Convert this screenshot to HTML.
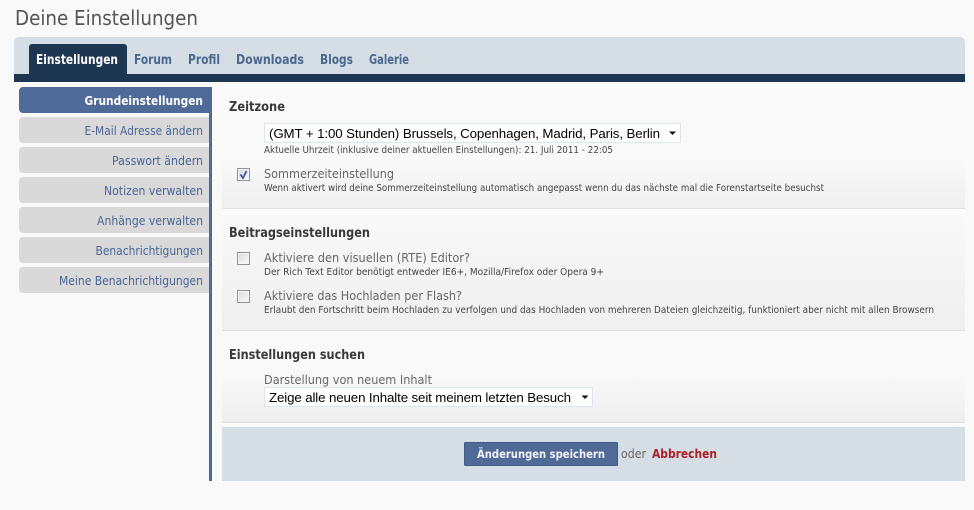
<!DOCTYPE html>
<html lang="de">
<head>
<meta charset="utf-8">
<title>Deine Einstellungen</title>
<style>
html,body{margin:0;padding:0;background:#f9f9f9;width:974px;height:510px;overflow:hidden}
svg{display:block;position:absolute;left:0;top:0}
text{font-family:"DejaVu Sans",sans-serif;white-space:pre}
.s{font-size:10px;fill:#444}
.l{font-size:12px;fill:#666}
.h{font-size:13px;font-weight:bold;fill:#3a3a3a}
.n{font-size:12px;fill:#4a6595}
.t{font-size:13px;font-weight:bold;fill:#4a688e}
.f{font-family:"Liberation Sans",sans-serif;font-size:13.300px;fill:#000}
</style>
</head>
<body>
<svg width="974" height="510" viewBox="0 0 974 510" xmlns="http://www.w3.org/2000/svg">
<defs>
<linearGradient id="g" x1="0" y1="0" x2="0" y2="1"><stop offset="0" stop-color="#f9f9f9"/><stop offset="1" stop-color="#efefef"/></linearGradient>
<linearGradient id="c" x1="0" y1="0" x2="1" y2="1"><stop offset="0" stop-color="#dcdcdc"/><stop offset="1" stop-color="#f8f8f8"/></linearGradient>
<linearGradient id="d" x1="0" y1="0" x2="1" y2="1"><stop offset="0" stop-color="#d5dae6"/><stop offset="1" stop-color="#f2f4f8"/></linearGradient>
</defs>
<rect width="974" height="510" fill="#f9f9f9"/>
<text x="15" y="25" font-size="20" fill="#555" textLength="183" lengthAdjust="spacingAndGlyphs">Deine Einstellungen</text>

<path d="M14 74V42a5 5 0 0 1 5-5H960a5 5 0 0 1 5 5V74z" fill="#d5dde5"/>
<rect x="14" y="74" width="951" height="8" fill="#1d3652"/>
<path d="M29 75V47a3 3 0 0 1 3-3H124a3 3 0 0 1 3 3V75z" fill="#1d3652"/>
<text x="36" y="64" class="t" style="fill:#fff" textLength="82" lengthAdjust="spacingAndGlyphs">Einstellungen</text>
<text x="134" y="64" class="t" textLength="38" lengthAdjust="spacingAndGlyphs">Forum</text>
<text x="188" y="64" class="t" textLength="32" lengthAdjust="spacingAndGlyphs">Profil</text>
<text x="236" y="64" class="t" textLength="68" lengthAdjust="spacingAndGlyphs">Downloads</text>
<text x="320" y="64" class="t" textLength="33" lengthAdjust="spacingAndGlyphs">Blogs</text>
<text x="369" y="64" class="t" textLength="40" lengthAdjust="spacingAndGlyphs">Galerie</text>

<rect x="209" y="87" width="3" height="394" fill="#4f6a96"/>
<path d="M212 113H23a4 4 0 0 1-4-4V91a4 4 0 0 1 4-4H212z" fill="#4f6a96"/>
<text x="84.500" y="105" font-size="12" font-weight="bold" fill="#fff" textLength="118.500" lengthAdjust="spacingAndGlyphs">Grundeinstellungen</text>
<path d="M209 143H23a4 4 0 0 1-4-4V121a4 4 0 0 1 4-4H209z" fill="#d9d9d9"/>
<path d="M209 173H23a4 4 0 0 1-4-4V151a4 4 0 0 1 4-4H209z" fill="#d9d9d9"/>
<path d="M209 203H23a4 4 0 0 1-4-4V181a4 4 0 0 1 4-4H209z" fill="#d9d9d9"/>
<path d="M209 233H23a4 4 0 0 1-4-4V211a4 4 0 0 1 4-4H209z" fill="#d9d9d9"/>
<path d="M209 263H23a4 4 0 0 1-4-4V241a4 4 0 0 1 4-4H209z" fill="#d9d9d9"/>
<path d="M209 293H23a4 4 0 0 1-4-4V271a4 4 0 0 1 4-4H209z" fill="#d9d9d9"/>
<text x="84.500" y="135" class="n" textLength="118.500" lengthAdjust="spacingAndGlyphs">E-Mail Adresse ändern</text>
<text x="112" y="165" class="n" textLength="91" lengthAdjust="spacingAndGlyphs">Passwort ändern</text>
<text x="104" y="195" class="n" textLength="99" lengthAdjust="spacingAndGlyphs">Notizen verwalten</text>
<text x="97" y="225" class="n" textLength="106" lengthAdjust="spacingAndGlyphs">Anhänge verwalten</text>
<text x="95.500" y="255" class="n" textLength="107.500" lengthAdjust="spacingAndGlyphs">Benachrichtigungen</text>
<text x="59" y="285" class="n" textLength="144" lengthAdjust="spacingAndGlyphs">Meine Benachrichtigungen</text>

<rect x="222" y="87" width="743" height="121" fill="#f9f9f9"/>
<rect x="222" y="87" width="743" height="1" fill="#fdfdfd"/>
<rect x="222" y="160" width="743" height="48" fill="url(#g)"/>
<rect x="222" y="208" width="743" height="1" fill="#e0e0e0"/>
<rect x="222" y="209" width="743" height="5" fill="#fdfdfd"/>
<rect x="222" y="214" width="743" height="116" fill="url(#g)"/>
<rect x="222" y="330" width="743" height="1" fill="#e0e0e0"/>
<rect x="222" y="372" width="743" height="50" fill="url(#g)"/>
<rect x="222" y="422" width="743" height="1" fill="#e0e0e0"/>
<rect x="222" y="423" width="743" height="4" fill="#fbfbfb"/>
<rect x="222" y="427" width="743" height="54" fill="#d5dde5"/>

<text x="229" y="111" class="h" textLength="56" lengthAdjust="spacingAndGlyphs">Zeitzone</text>
<rect x="264.500" y="123.500" width="416" height="19" fill="#fff" stroke="#dfe5ee"/>
<text x="269" y="138" class="f" textLength="391" lengthAdjust="spacing">(GMT + 1:00 Stunden) Brussels, Copenhagen, Madrid, Paris, Berlin</text>
<path d="M669 131.500h7l-3.500 3.500z" fill="#111"/>
<text x="264" y="153" class="s" textLength="349" lengthAdjust="spacingAndGlyphs">Aktuelle Uhrzeit (inklusive deiner aktuellen Einstellungen): 21. Juli 2011 - 22:05</text>

<rect x="237" y="168" width="13" height="13" fill="#8f939a"/>
<rect x="238" y="169" width="11" height="11" fill="#f6f6f6"/>
<rect x="239" y="170" width="9" height="9" fill="url(#d)"/>
<path d="M240.500 174.500l2.500 3.500 3.500-7" fill="none" stroke="#3c55a5" stroke-width="1.800"/>
<text x="264" y="178" class="l" textLength="130" lengthAdjust="spacingAndGlyphs">Sommerzeiteinstellung</text>
<text x="264" y="191" class="s" textLength="560" lengthAdjust="spacingAndGlyphs">Wenn aktivert wird deine Sommerzeiteinstellung automatisch angepasst wenn du das nächste mal die Forenstartseite besuchst</text>

<text x="229" y="237" class="h" textLength="141" lengthAdjust="spacingAndGlyphs">Beitragseinstellungen</text>
<rect x="237" y="252" width="13" height="13" fill="#939393"/>
<rect x="238" y="253" width="11" height="11" fill="#f6f6f6"/>
<rect x="239" y="254" width="9" height="9" fill="url(#c)"/>
<text x="264" y="262" class="l" textLength="206" lengthAdjust="spacingAndGlyphs">Aktiviere den visuellen (RTE) Editor?</text>
<text x="264" y="275" class="s" textLength="340" lengthAdjust="spacingAndGlyphs">Der Rich Text Editor benötigt entweder IE6+, Mozilla/Firefox oder Opera 9+</text>
<rect x="237" y="290" width="13" height="13" fill="#939393"/>
<rect x="238" y="291" width="11" height="11" fill="#f6f6f6"/>
<rect x="239" y="292" width="9" height="9" fill="url(#c)"/>
<text x="264" y="300" class="l" textLength="198" lengthAdjust="spacingAndGlyphs">Aktiviere das Hochladen per Flash?</text>
<text x="264" y="313" class="s" textLength="670" lengthAdjust="spacingAndGlyphs">Erlaubt den Fortschritt beim Hochladen zu verfolgen und das Hochladen von mehreren Dateien gleichzeitig, funktioniert aber nicht mit allen Browsern</text>

<text x="229" y="359" class="h" textLength="136" lengthAdjust="spacingAndGlyphs">Einstellungen suchen</text>
<text x="264" y="384" class="l" textLength="168" lengthAdjust="spacingAndGlyphs">Darstellung von neuem Inhalt</text>
<rect x="264.500" y="387.500" width="328" height="19" fill="#fff" stroke="#dfe5ee"/>
<text x="269" y="402" class="f" textLength="302" lengthAdjust="spacing">Zeige alle neuen Inhalte seit meinem letzten Besuch</text>
<path d="M581.500 395.500h7l-3.500 3.500z" fill="#111"/>

<rect x="464.500" y="442.500" width="153" height="23" rx="1" fill="#4f6a96" stroke="#3f5a86"/>
<text x="477" y="458" font-size="11.500" font-weight="bold" fill="#f2f4f8" textLength="128" lengthAdjust="spacingAndGlyphs">Änderungen speichern</text>
<text x="621" y="458" class="l" textLength="25" lengthAdjust="spacingAndGlyphs">oder</text>
<text x="652" y="458" font-size="12.500" font-weight="bold" fill="#a81f27" textLength="65" lengthAdjust="spacingAndGlyphs">Abbrechen</text>
</svg>
</body>
</html>
